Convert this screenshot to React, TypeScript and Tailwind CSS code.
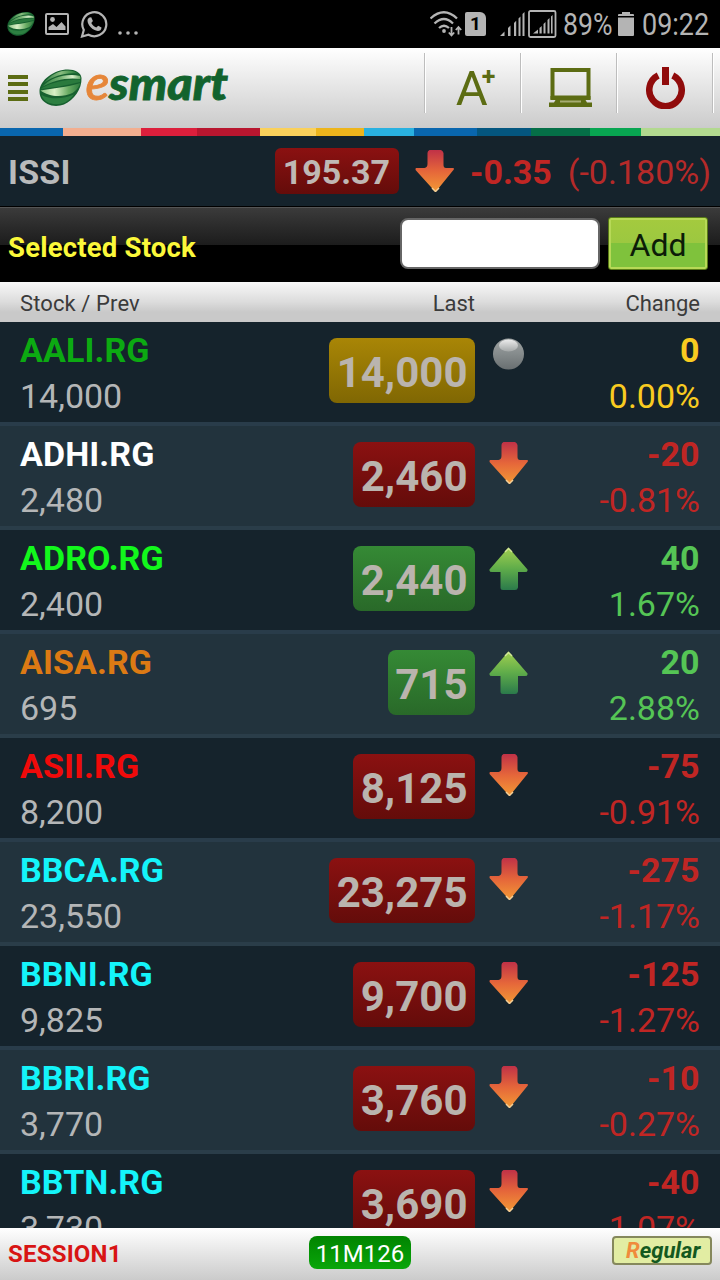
import React, { useState } from "react";

type Trend = "up" | "down" | "flat";

interface Stock {
  code: string;
  codeColor: string;
  prev: string;
  last: string;
  trend: Trend;
  change: string;
  percent: string;
}

const stocks: Stock[] = [
  { code: "AALI.RG", codeColor: "text-[#0caa12]", prev: "14,000", last: "14,000", trend: "flat", change: "0", percent: "0.00%" },
  { code: "ADHI.RG", codeColor: "text-white", prev: "2,480", last: "2,460", trend: "down", change: "-20", percent: "-0.81%" },
  { code: "ADRO.RG", codeColor: "text-[#12f81c]", prev: "2,400", last: "2,440", trend: "up", change: "40", percent: "1.67%" },
  { code: "AISA.RG", codeColor: "text-[#dc7a14]", prev: "695", last: "715", trend: "up", change: "20", percent: "2.88%" },
  { code: "ASII.RG", codeColor: "text-[#f00a0a]", prev: "8,200", last: "8,125", trend: "down", change: "-75", percent: "-0.91%" },
  { code: "BBCA.RG", codeColor: "text-[#14f4fa]", prev: "23,550", last: "23,275", trend: "down", change: "-275", percent: "-1.17%" },
  { code: "BBNI.RG", codeColor: "text-[#14f4fa]", prev: "9,825", last: "9,700", trend: "down", change: "-125", percent: "-1.27%" },
  { code: "BBRI.RG", codeColor: "text-[#14f4fa]", prev: "3,770", last: "3,760", trend: "down", change: "-10", percent: "-0.27%" },
  { code: "BBTN.RG", codeColor: "text-[#14f4fa]", prev: "3,730", last: "3,690", trend: "down", change: "-40", percent: "-1.07%" },
];

const stripes = [
  { width: 63, color: "#0966ae" },
  { width: 78, color: "#f2ae8f" },
  { width: 56, color: "#dc1f3c" },
  { width: 63, color: "#b8162f" },
  { width: 56, color: "#fad15b" },
  { width: 48, color: "#edb51c" },
  { width: 50, color: "#29b1e0" },
  { width: 63, color: "#0966ae" },
  { width: 54, color: "#04567f" },
  { width: 59, color: "#056f47" },
  { width: 51, color: "#08a551" },
  { width: 79, color: "#b2d98f" },
];

const badgeColors: Record<Trend, string> = {
  up: "from-[#358a35] to-[#296929]",
  down: "from-[#8b1111] to-[#640c0a]",
  flat: "from-[#a98606] to-[#806703]",
};

const textColors: Record<Trend, string> = {
  up: "text-[#55c555]",
  down: "text-[#c02624]",
  flat: "text-[#f9cb20]",
};

const Leaf: React.FC<{ className: string }> = ({ className }) => (
  <svg className={className} viewBox="0 0 43 38" aria-hidden="true">
    <defs>
      <linearGradient id="leafTop" x1="0" y1="0" x2="1" y2="0">
        <stop offset="0" stopColor="#2f7d42" />
        <stop offset="0.5" stopColor="#8abd80" />
        <stop offset="0.75" stopColor="#4f9a55" />
        <stop offset="1" stopColor="#1f6d35" />
      </linearGradient>
      <linearGradient id="leafMid" x1="0" y1="0" x2="1" y2="0">
        <stop offset="0" stopColor="#2c7c3e" />
        <stop offset="0.5" stopColor="#7ab676" />
        <stop offset="0.8" stopColor="#d6eec8" />
        <stop offset="1" stopColor="#6aa967" />
      </linearGradient>
      <linearGradient id="leafLow" x1="0" y1="0" x2="1" y2="0">
        <stop offset="0" stopColor="#8cc183" />
        <stop offset="0.35" stopColor="#d9f0c6" />
        <stop offset="0.7" stopColor="#68ab62" />
        <stop offset="1" stopColor="#2a783b" />
      </linearGradient>
    </defs>
    <path d="M0.500 22C1 11 15 0.500 29 0.500c7 0 13 3 13.500 8.500C43 20 35 31 25 35.500c-5 2-12 2-16.500-0.500C3 32 0.500 28 0.500 22z" fill="#17602f" />
    <path d="M5 14C11 6 20 1.500 29 1.500c4 0 7.500 1 10 3C27 3 15 6.500 5 14z" fill="url(#leafTop)" />
    <path d="M3 18C12 8 28 4 41 7c0.500 1 0.500 2 0.300 3C28 8 14 11.500 3 18z" fill="url(#leafMid)" />
    <path d="M3 19C13 13 28 10 41.200 10.500V13C28 16.500 14 18.500 2 20z" fill="#2a7a3d" />
    <path d="M1.500 21.500C14 19 28 18.500 41.500 14c-2 5-5 8-8 10C23 29 9 27.500 1.500 21.500z" fill="url(#leafLow)" />
    <path d="M2.500 26C12 31 25 30 35 25.500c-4 5-8 8-12 9C14 36.500 5 34 2.500 26z" fill="#2d7f41" />
  </svg>
);

const TrendIcon: React.FC<{ trend: Trend }> = ({ trend }) => {
  if (trend === "flat") {
    return (
      <svg className="mt-[-1px] h-[34px] w-[39px]" viewBox="0 0 39 34">
        <defs>
          <linearGradient id="ball" x1="0" y1="0" x2="0" y2="1">
            <stop offset="0" stopColor="#a0a4a4" />
            <stop offset="0.5" stopColor="#858b8c" />
            <stop offset="1" stopColor="#696f71" />
          </linearGradient>
          <linearGradient id="ballShine" x1="0" y1="0" x2="0" y2="1">
            <stop offset="0" stopColor="#ececec" />
            <stop offset="1" stopColor="#a4a8a8" />
          </linearGradient>
        </defs>
        <circle cx="19.500" cy="17" r="15.500" fill="url(#ball)" />
        <ellipse cx="19.500" cy="8.500" rx="9.500" ry="6" fill="url(#ballShine)" />
      </svg>
    );
  }

  if (trend === "up") {
    return (
      <svg className="h-11 w-[39px]" viewBox="0 0 39 44">
        <defs>
          <linearGradient id="arrowUp" x1="0" y1="0" x2="0" y2="1">
            <stop offset="0" stopColor="#a2cf50" />
            <stop offset="0.5" stopColor="#5fac4a" />
            <stop offset="1" stopColor="#2b7a4b" />
          </linearGradient>
        </defs>
        <path d="M19.500 1.500L38.500 23.500Q39 26 36 26H29V41.500Q28.500 44 26 44H14Q11.500 44 11.500 41.500V26H3Q0 26 0.500 23.500z" fill="url(#arrowUp)" />
        <path d="M16 6L19.500 2.500 23 6" fill="none" stroke="#d3e796" strokeWidth="1.500" />
      </svg>
    );
  }

  return (
    <svg className="h-[42px] w-[39px]" viewBox="0 0 39 42">
      <defs>
        <linearGradient id="arrowDown" x1="0" y1="0" x2="0" y2="1">
          <stop offset="0" stopColor="#c03147" />
          <stop offset="0.5" stopColor="#e5663a" />
          <stop offset="1" stopColor="#f39a35" />
        </linearGradient>
      </defs>
      <path d="M14.500 0H26Q28 1 28.500 3V15Q28.500 18 31 18H38.500Q39.500 19 38 20.500L20.500 42 1 20.500Q0 19 1 18H9.500Q12.500 17.500 12.500 14V3Q12.500 1 14.500 0z" fill="url(#arrowDown)" />
      <path d="M17 38L20.500 41.500 24 38" fill="none" stroke="#f5cf96" strokeWidth="1.500" />
    </svg>
  );
};

const StatusBar: React.FC = () => (
  <div className="flex h-12 shrink-0 items-center justify-between bg-black pl-[7px] pr-[10px] text-[#b4b4b4]">
    <div className="flex items-center">
      <Leaf className="h-[26px] w-[28px]" />
      <svg className="ml-[10px] h-6 w-6" viewBox="0 0 24 24">
        <path fillRule="evenodd" fill="currentColor" d="M2 1H22Q24 1 24 3V21Q24 23 22 23H2Q0 23 0 21V3Q0 1 2 1zM2 3V21H22V3z" />
        <path d="M3.500 18V15L8 12l3.500 3L16.500 10l4 4.500V18z" fill="currentColor" />
        <circle cx="7.500" cy="7.500" r="2.400" fill="currentColor" />
      </svg>
      <svg className="ml-[11px] h-7 w-7" viewBox="0 0 28 28">
        <path d="M2 26.500L3.800 20A12 12 0 1 1 8.500 24.700z" fill="none" stroke="currentColor" strokeWidth="2.200" />
        <path d="M9.500 7.500l1.700-.2 1.700 3.700-1.600 2c1.200 2.300 2.800 3.700 5 4.600l1.900-1.900 3.300 1.700c0 2.200-1.600 3.600-3.600 3.600C12.700 20.500 7.500 15 7.500 10.500c0-1.200.9-2.300 2-3z" fill="currentColor" />
      </svg>
      <svg className="ml-[10px] h-5 w-5 translate-y-2" viewBox="0 0 20 20" fill="currentColor">
        <circle cx="2" cy="11" r="1.800" />
        <circle cx="10" cy="11" r="1.800" />
        <circle cx="18" cy="11" r="1.800" />
      </svg>
    </div>
    <div className="flex items-center">
      <svg className="h-[26px] w-8" viewBox="0 0 32 26" fill="none" stroke="currentColor" strokeWidth="2.300">
        <path d="M0.500 7.500Q14-5 27 7.500M4.500 12.500Q14 3.500 23 12.500M9 17Q14 12.500 19 17" />
        <circle cx="14" cy="20" r="1.900" fill="currentColor" stroke="none" />
        <path d="M21.500 16v8.500M18.800 21.500l2.700 3 2.700-3M28.500 23.500V16M25.800 19l2.700-3 2.700 3" strokeWidth="1.800" />
      </svg>
      <div className="ml-[3px] mr-px flex h-[24px] w-[21px] items-center justify-center rounded-[2px] rounded-tr-[6px] bg-[#b4b4b4] text-[19px] font-bold text-black">
        1
      </div>
      <svg className="ml-3 h-7 w-[58px]" viewBox="0 0 58 28">
        <path d="M1 26l4.500-4.500V26zM9 18l2.500-2.500V26H9zM15 13l2.200-2.300V26H15zM19.500 8.500l2-2V26h-2zM23.500 4L25.500 2V26h-2z" fill="currentColor" />
        <rect x="30" y="1" width="26.500" height="26" rx="1.500" fill="none" stroke="currentColor" strokeWidth="1.800" />
        <path d="M34 23.500l5-4v4zM40.500 18l2.200-2v7.500h-2.200zM44.500 14l2-2v11.500h-2zM48.500 10l2-2v15.500h-2zM52 6.500l1.600-1.600v18.600H52z" fill="currentColor" />
      </svg>
      <span className="ml-[6px] w-[48px] origin-left scale-x-[0.86] text-[31px] leading-none">89%</span>
      <svg className="ml-[7px] h-6 w-4" viewBox="0 0 16 24" fill="currentColor">
        <path d="M4 0h8v2h3q1 0 1 1V4H0V3q0-1 1-1h3zM0 5.500h16V23q0 1-1 1H1q-1 0-1-1z" />
      </svg>
      <span className="ml-2 w-[68px] origin-left scale-x-[0.87] text-[31px] leading-none">09:22</span>
    </div>
  </div>
);

const Header: React.FC = () => (
  <header className="flex h-20 shrink-0 justify-between bg-linear-to-b from-white to-[#cbcbcb]">
    <div className="flex pl-2">
      <button type="button" aria-label="Menu" className="mt-[27px] flex h-[26px] w-5 flex-col justify-between">
        <i className="h-1 w-full bg-[#5c6c13]" />
        <i className="h-1 w-full bg-[#5c6c13]" />
        <i className="h-1 w-full bg-[#5c6c13]" />
        <i className="h-1 w-full bg-[#5c6c13]" />
      </button>
      <Leaf className="ml-[11px] mt-[21px] h-[38px] w-[43px]" />
      <svg className="mt-1 h-[72px] w-[152px]" viewBox="0 0 152 72" fontFamily="Lato, sans-serif" fontStyle="italic">
        <text x="3.500" y="48" fontSize="49" fontWeight="500" fill="#e68639" stroke="#e68639" strokeWidth="0.800" textLength="24" lengthAdjust="spacingAndGlyphs">
          e
        </text>
        <text x="27" y="48" fontSize="45" fontWeight="900" fill="#12632d" stroke="#12632d" strokeWidth="0.800" textLength="119" lengthAdjust="spacingAndGlyphs">
          smart
        </text>
      </svg>
    </div>
    <div className="mt-[5px] flex h-[60px] w-[296px]">
      <button type="button" className="flex w-24 justify-center border-l border-[#bdbdbd] pl-1.5 text-[#5c6c13] shadow-[inset_1px_0_#fff]">
        <span className="mt-[7px] text-[49px] leading-[58px]">A</span>
        <span className="-ml-1.5 mt-[9px] text-[25px] font-bold leading-[30px]">+</span>
      </button>
      <button type="button" aria-label="Screen" className="flex w-24 justify-center border-l border-[#bdbdbd] pl-1 shadow-[inset_1px_0_#fff]">
        <svg className="mt-[13px] h-[42px] w-[43px]" viewBox="0 0 43 42">
          <rect x="3.500" y="4" width="36" height="27.500" fill="none" stroke="#5c6c13" strokeWidth="4" />
          <path d="M1.500 30h40v4h-5l1.500 2.500H43V41H0v-4.500h5L6.500 34h-5z" fill="#5c6c13" />
          <path d="M11 34.500h21v2H11z" fill="#a5ab72" />
        </svg>
      </button>
      <button type="button" aria-label="Log out" className="flex w-24 justify-center border-l border-[#bdbdbd] pl-0.5 shadow-[inset_1px_0_#fff]">
        <svg className="mt-[13px] h-[43px] w-[39px]" viewBox="0 0 39 43">
          <path d="M12.200 9.500A16.200 16.200 0 1 0 26.800 9.500" fill="none" stroke="#900b0b" strokeWidth="6.500" />
          <rect x="16" y="1" width="7" height="18" fill="#900b0b" />
        </svg>
      </button>
      <div className="w-2 border-l border-[#bdbdbd] shadow-[inset_1px_0_#fff]" />
    </div>
  </header>
);

const StockRow: React.FC<{ stock: Stock; odd: boolean }> = ({ stock, odd }) => (
  <li
    className={`flex h-[104px] shrink-0 justify-between border-b-4 px-5 pt-[5px] text-[34px] leading-[46px] ${
      odd ? "border-[#2a3d49] bg-[#22333d]" : "border-[#293c4a] bg-[#15232c]"
    }`}
  >
    <div className="w-[220px]">
      <p className={`font-bold tracking-[0.1px] ${stock.codeColor}`}>{stock.code}</p>
      <p className="text-[#b4b6b7]">{stock.prev}</p>
    </div>
    <div className="flex flex-1 items-start justify-end gap-[14px] pt-[11px]">
      <span
        className={`h-[65px] rounded-lg bg-linear-to-b pl-[7.5px] pr-[7.5px] pt-1 text-[42px] font-bold leading-[61px] text-[#bab4ae] ${badgeColors[stock.trend]}`}
      >
        {stock.last}
      </span>
      <TrendIcon trend={stock.trend} />
    </div>
    <div className={`w-[172px] text-right ${textColors[stock.trend]}`}>
      <p className="pr-[0.5px] font-bold">{stock.change}</p>
      <p>{stock.percent}</p>
    </div>
  </li>
);

const App: React.FC = () => {
  const [code, setCode] = useState("");

  return (
    <div className="flex h-[1280px] w-[720px] flex-col overflow-hidden bg-[#15232c] font-[Roboto,sans-serif]">
      <StatusBar />
      <Header />
      <div className="flex h-2 shrink-0">
        {stripes.map((stripe, index) => (
          <div key={index} style={{ width: stripe.width, backgroundColor: stripe.color }} />
        ))}
      </div>

      <section className="flex h-[71px] shrink-0 items-center border-b border-black bg-[#15232c] pl-2 pr-[9px] text-[34px] leading-[46px]">
        <span className="flex-1 pt-[2px] font-bold tracking-[0.2px] text-[#b9bbbc]">ISSI</span>
        <span className="h-[46px] rounded-md bg-linear-to-b from-[#8b1111] to-[#640c0a] pl-[8px] pr-[9px] pt-px font-bold text-[#c0b8b4]">
          195.37
        </span>
        <span className="ml-4">
          <TrendIcon trend="down" />
        </span>
        <span className="ml-4 pt-[2px] font-bold text-[#c02624]">-0.35</span>
        <span className="ml-4 pt-[2px] text-[#b52a29]">(-0.180%)</span>
      </section>

      <section className="flex h-[75px] shrink-0 items-start border-t border-[#555] bg-linear-to-b from-[#3b3b3b] from-0% via-[#1c1c1c] via-50% to-black to-50% pl-2 pr-3">
        <h1 className="flex-1 pt-[19px] text-[27.5px] font-bold leading-[42px] tracking-[0.2px] text-[#fbf83a]">Selected Stock</h1>
        <input
          className="mt-[10px] h-[51px] w-[200px] rounded-lg border-2 border-[#666] bg-white px-2 text-[28px] outline-none"
          value={code}
          onChange={(e) => setCode(e.target.value)}
        />
        <button
          type="button"
          className="ml-2 mt-[9px] h-[53px] w-[100px] rounded-[3px] border border-[#587a16] bg-linear-to-b from-[#a4ca3e] from-0% via-[#9cc840] via-50% to-[#7fc23c] to-50% pt-[2px] text-[32px] text-[#0c1c08] shadow-[inset_0_0_0_2px_#b7d957]"
        >
          Add
        </button>
      </section>

      <div className="flex h-10 shrink-0 items-center bg-linear-to-b from-[#f8f8f8] from-0% via-[#dcdcdc] via-50% to-[#c9c9c9] to-75% px-5 pt-[3px] text-[22px] text-[#3b3b3b]">
        <span className="w-[220px] tracking-[0.1px]">Stock / Prev</span>
        <span className="w-[235px] text-right">Last</span>
        <span className="flex-1 text-right">Change</span>
      </div>

      <ul className="flex min-h-0 flex-1 flex-col overflow-hidden">
        {stocks.map((stock, index) => (
          <StockRow key={stock.code} stock={stock} odd={index % 2 === 1} />
        ))}
      </ul>

      <footer className="flex h-[52px] shrink-0 items-start justify-between bg-linear-to-b from-white to-[#cbcbcb] px-2 pt-2">
        <span className="w-[290px] text-[24px] font-bold leading-[36px] tracking-[0.2px] text-[#d81414]">SESSION1</span>
        <span className="h-[33px] rounded-lg bg-linear-to-b from-[#018401] to-[#0aa60a] px-[7px] text-[24px] leading-[37px] text-white">
          11M126
        </span>
        <span className="flex w-[290px] justify-end">
          <span className="h-[29px] w-[100px] rounded-[4px] border-2 border-[#85885c] bg-[#e2eda3] pl-[12px] text-[22px] font-bold italic leading-[26px] text-[#14591f]">
            <span className="text-[#f08b3c]">R</span>egular
          </span>
        </span>
      </footer>
    </div>
  );
};

export default App;
